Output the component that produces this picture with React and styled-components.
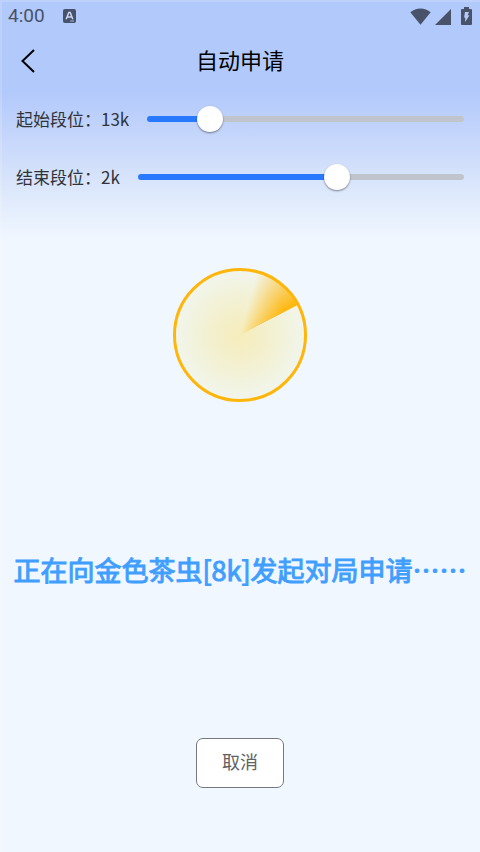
import React, { useState } from "react";
import styled, { createGlobalStyle } from "styled-components";

const GlobalStyle = createGlobalStyle`
  * { box-sizing: border-box; }
  body {
    margin: 0;
    background: #f1f7ff;
    font-family: "Noto Sans CJK SC", "Noto Sans", sans-serif;
  }
`;

const Page = styled.div`
  display: flex;
  flex-direction: column;
  min-height: 100vh;
  background: linear-gradient(
    180deg,
    #b2c9fb 0,
    #b2c9fb 92px,
    #c8d8fb 142px,
    #dae6fb 186px,
    #f1f7ff 240px
  );
  box-shadow: inset 2px 2px 0 rgba(255, 255, 255, 0.16);
`;

const StatusBar = styled.div`
  display: flex;
  align-items: center;
  height: 32px;
  padding: 0 8px;
  color: #485268;
`;

const Clock = styled.time`
  font: 400 19px/32px Roboto, sans-serif;
`;

const StatusIcons = styled.div`
  display: flex;
  align-items: center;
  gap: 4px;
  margin-left: auto;
`;

const Glyph = styled.svg`
  display: block;
  flex: none;
  fill: currentColor;
`;

const KeyboardGlyph = styled(Glyph)`
  margin-left: 18px;
`;

const BatteryGlyph = styled(Glyph)`
  margin-left: 6px;
`;

const TitleBar = styled.header`
  display: grid;
  grid-template-columns: 40px 1fr 40px;
  align-items: center;
  height: 58px;
  padding: 0 8px;
`;

const BackButton = styled.button`
  display: flex;
  align-items: center;
  justify-content: center;
  height: 40px;
  padding: 0;
  border: 0;
  background: none;
  color: #000;
  cursor: pointer;
`;

const Title = styled.h1`
  margin: 0;
  padding-bottom: 4px;
  font-size: 22px;
  line-height: 32px;
  font-weight: 400;
  text-align: center;
  color: #000;
`;

const Settings = styled.section`
  display: flex;
  flex-direction: column;
  padding: 0 16px;
`;

const SliderRow = styled.div`
  display: flex;
  align-items: center;
  gap: 18px;
  height: 58px;
`;

const SliderLabel = styled.label`
  flex: none;
  font-size: 17px;
  line-height: 26px;
  color: #303338;
  white-space: nowrap;
`;

const Slider = styled.input`
  flex: 1;
  min-width: 0;
  height: 26px;
  margin: 0;
  appearance: none;
  background: none;
  cursor: pointer;

  &::-webkit-slider-runnable-track {
    height: 6px;
    border-radius: 3px;
    background: linear-gradient(
      90deg,
      #2979ff 0,
      #2979ff var(--fill),
      #c0c4cc var(--fill)
    );
  }

  &::-webkit-slider-thumb {
    appearance: none;
    width: 26px;
    height: 26px;
    margin-top: -10px;
    border-radius: 50%;
    background: #fff;
    box-shadow: 0 1px 2px rgba(0, 0, 0, 0.45);
  }
`;

const Main = styled.main`
  display: flex;
  flex-direction: column;
  align-items: center;
  padding: 62px 8px 64px;
`;

const Radar = styled.div`
  width: 134px;
  height: 134px;
  border: 3px solid #ffb60a;
  border-radius: 50%;
  background:
    radial-gradient(
      circle closest-side,
      #f5edbd 0,
      rgba(245, 238, 196, 0.55) 25%,
      rgba(244, 240, 207, 0.25) 50%,
      rgba(241, 245, 234, 0) 80%
    ),
    conic-gradient(
      rgba(255, 182, 10, 0) 15deg,
      rgba(255, 182, 10, 1) 62deg,
      rgba(255, 182, 10, 0) 63deg
    ),
    radial-gradient(circle closest-side, #f5edbd 0, #f3f1d3 50%, #f1f5eb 100%);
`;

const Message = styled.p`
  margin: 148px 0 0;
  font-size: 27px;
  line-height: 40px;
  font-weight: 400;
  -webkit-text-stroke: 1px currentColor;
  text-align: center;
  white-space: nowrap;
  color: #409eff;
`;

const CancelButton = styled.button`
  height: 50px;
  margin-top: 148px;
  padding: 0 25px 4px;
  border: 1px solid #75797f;
  border-radius: 7px;
  background: #fff;
  color: #606266;
  font-family: inherit;
  font-size: 18px;
  line-height: 26px;
  cursor: pointer;
`;

function RankSlider({ id, label, initial, initialRank }) {
  const [value, setValue] = useState(initial);
  const rank = value === initial ? initialRank : rankOf(value);
  return (
    <SliderRow>
      <SliderLabel htmlFor={id}>{label}：{rank}</SliderLabel>
      <Slider
        id={id}
        type="range"
        min="0"
        max="100"
        value={value}
        onChange={(e) => setValue(Number(e.target.value))}
        style={{ "--fill": `${value}%` }}
      />
    </SliderRow>
  );
}

function rankOf(value) {
  const step = Math.round((value * 24) / 100);
  return step < 17 ? `${17 - step}k` : `${step - 16}d`;
}

export default function App() {
  return (
    <>
      <GlobalStyle />
      <Page>
        <StatusBar>
          <Clock>4:00</Clock>
          <KeyboardGlyph width="13" height="14" viewBox="0 0 13 14" aria-hidden="true">
            <rect width="13" height="14" rx="2" />
            <path d="M3.2 10.2 5.8 3.6h1.4l2.6 6.6M4.5 8h4" fill="none" stroke="#cbd8f4" strokeWidth="1.5" />
            <path d="M7 12h4" stroke="#9eafd4" strokeWidth="1" />
          </KeyboardGlyph>
          <StatusIcons>
            <Glyph width="21" height="17" viewBox="0 0 21 17" aria-hidden="true">
              <path d="M.3 4.2C6-.9 15-.9 20.7 4.2L10.5 16.8Z" />
            </Glyph>
            <Glyph width="16" height="17" viewBox="0 0 16 17" aria-hidden="true">
              <path d="M16 1v16H0Z" />
            </Glyph>
            <BatteryGlyph width="11" height="18" viewBox="0 0 11 18" aria-hidden="true">
              <path d="M3 0h5v2h2q1 0 1 1v14q0 1-1 1H1q-1 0-1-1V3q0-1 1-1h2Z" />
              <path d="M4 5h4L6.6 8.2H8.5L4.2 15V10.6H3Z" fill="#b2c9fb" />
            </BatteryGlyph>
          </StatusIcons>
        </StatusBar>
        <TitleBar>
          <BackButton type="button" aria-label="返回">
            <Glyph width="14" height="24" viewBox="0 0 14 24" aria-hidden="true">
              <path d="M13 1 1.5 12 13 23" fill="none" stroke="currentColor" strokeWidth="2" />
            </Glyph>
          </BackButton>
          <Title>自动申请</Title>
        </TitleBar>
        <Settings>
          <RankSlider id="start-rank" label="起始段位" initial={17} initialRank="13k" />
          <RankSlider id="end-rank" label="结束段位" initial={62} initialRank="2k" />
        </Settings>
        <Main>
          <Radar />
          <Message role="status">正在向金色茶虫[8k]发起对局申请……</Message>
          <CancelButton type="button">取消</CancelButton>
        </Main>
      </Page>
    </>
  );
}
